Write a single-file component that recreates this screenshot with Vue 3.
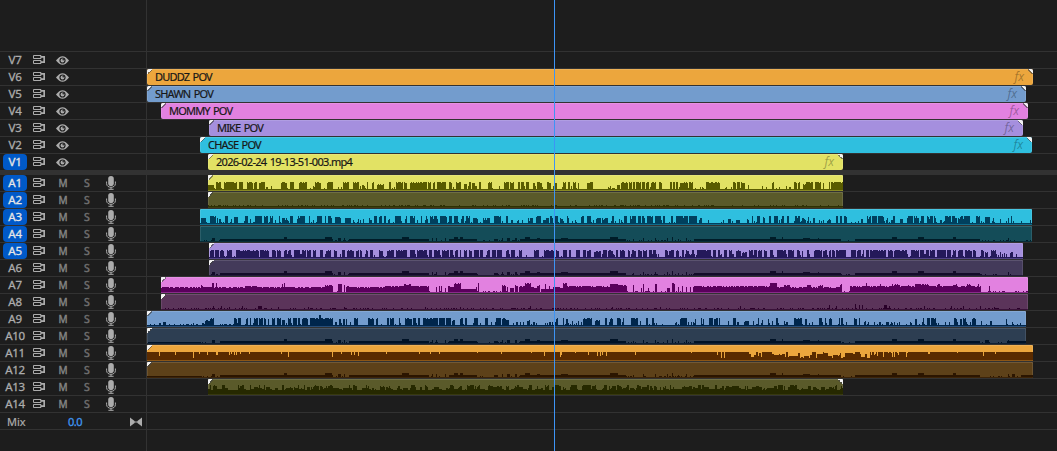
<!-- eslint-disable vue/multi-word-component-names -->
<!--
  Timeline panel: video tracks, audio tracks with waveforms, mix row and playhead
-->
<template>
  <div class="timeline">
    <div class="row ruler">
      <div class="head"></div>
    </div>

    <!-- video tracks -->
    <div v-for="track in videoTracks" :key="track.id" class="row" :class="{ last: track.id === 'V1' }">
      <div class="head">
        <span class="label" :class="{ active: track.id === 'V1' }">{{ track.id }}</span>
        <svg class="sync" viewBox="0 0 12 10">
          <path d="M.5.5h7.5v3H.5zM.5 5.5h7.5v3H.5z" />
          <path class="thick" d="M7.5 1.8h3.7v5.4H7.5" />
        </svg>
        <svg class="eye" viewBox="0 0 13 9">
          <path d="M0 4.5Q6.5-4 13 4.5Q6.5 13 0 4.5Z" fill="#acacac" />
          <circle cx="6.5" cy="4.5" r="3.1" fill="#1d1d1d" />
          <circle cx="6.5" cy="4.5" r="1.9" fill="#acacac" />
          <circle cx="7.2" cy="3.8" r=".8" fill="#1d1d1d" />
        </svg>
      </div>
      <div class="lane">
        <div v-if="track.name" class="clip video" :style="clipStyle(track)">
          <i class="corner"></i>
          <span class="name" :class="{ file: track.id === 'V1' }">{{ track.name }}</span>
          <span class="fx">fx</span>
          <i class="corner right"></i>
        </div>
      </div>
    </div>

    <div class="divider"></div>

    <!-- audio tracks -->
    <div v-for="track in audioTracks" :key="track.id" class="row">
      <div class="head">
        <span class="label" :class="{ active: track.on }">{{ track.id }}</span>
        <svg class="sync" viewBox="0 0 12 10">
          <path d="M.5.5h7.5v3H.5zM.5 5.5h7.5v3H.5z" />
          <path class="thick" d="M7.5 1.8h3.7v5.4H7.5" />
        </svg>
        <span class="mute">M</span>
        <span class="solo">S</span>
        <svg class="mic" viewBox="0 0 10 14">
          <rect x="2.2" y="0" width="5.6" height="10" rx="2.8" fill="#acacac" />
          <path d="M.6 5.5v2.2c0 4.8 8.8 4.8 8.8 0V5.5M5 11.3v2M2.4 13.3h5.2" fill="none" stroke="#acacac" />
        </svg>
      </div>
      <div class="lane">
        <div v-if="track.bg" class="clip audio" :style="clipStyle(track)">
          <svg class="wave" :width="track.end - track.start" height="16" shape-rendering="crispEdges">
            <path :d="wavePath(track)" :fill="track.wave" />
            <rect y="15" width="100%" height="1" :fill="track.bg" opacity=".35" />
          </svg>
          <i v-if="track.corner" class="corner"></i>
          <i v-if="track.id === 'A13'" class="corner right"></i>
        </div>
      </div>
    </div>

    <div class="row">
      <div class="head mix">
        <span class="mix-label">Mix</span>
        <span class="mix-value">0.0</span>
        <svg class="bowtie" viewBox="0 0 12 10">
          <path d="M0 .5L4.6 4V6L0 9.5ZM12 .5L7.4 4V6L12 9.5Z" fill="#acacac" />
          <path d="M4 5h4" stroke="#acacac" />
        </svg>
      </div>
    </div>
    <div class="rest">
      <div class="head"></div>
    </div>

    <div class="playhead"></div>
  </div>
</template>

<script setup>
// left edge of the lanes
const LANE = 147

const videoTracks = [
  { id: 'V7' },
  { id: 'V6', name: 'DUDDZ POV', start: 147, end: 1033, bg: '#eca63d' },
  { id: 'V5', name: 'SHAWN POV', start: 147, end: 1026, bg: '#739ccd' },
  { id: 'V4', name: 'MOMMY POV', start: 161, end: 1028, bg: '#e281e0' },
  { id: 'V3', name: 'MIKE POV', start: 209, end: 1023, bg: '#a58fde' },
  { id: 'V2', name: 'CHASE POV', start: 200, end: 1032, bg: '#2fbfdf' },
  { id: 'V1', name: '2026-02-24 19-13-51-003.mp4', start: 208, end: 843, bg: '#e2e264' }
]

// bursts: "from-to:height", height defaults to 8
const speechA1 = '208-213:5 216-220 224-229 230-233 234-236 239-242 247-252 254-256 259-262 263-264 281-284 285-286 290-293 299-306 315-320 327-332 343-348 353-358 362-364:5 367 372-373 377-383:6 389-390 396-402 404-406 410-426 428-430 433-434 437-439 440-445 449-451 456-458 459-460 464-466:6 469-470 472-474 479-480 488-491 504-508 510-513 518-519 521-523 526-528 533-534 537-541 547-550 555-556 563-565 568-569 573-575 578 587-592 617-619:5 621-627 629-631 633-634 636-638 639-640 642-644 646-648 651-655 659-661 670-671 673-674 676-677 680-687 689-692 706-707 708-719 733-735 737-739 741-744 748:6 772-773 794-796 798-799 803-805:6 806-812 815-820 823 829 831-842'
const speechA3 = '201-205:6 210-215 217 219-220:5 225-227 231:5 234-237:7 245-247 250 255-261 264-267 270-272 275:4 279 282-287:6 290-292 297-304 309 317-321 325 328-331 335-340:7 345-350:6 358:5 363:5 369:6 374-376 379-381 384-385 389:5 395-400 405-406 410-414 417:4 421 426-427 430-437 440-446 449-451 454-457 461-463 466-469 473-477:6 483-489:6 494-500 506-507 511:4 528-532:6 536-540 545-548:6 550-552 555-557 560-563:6 567-568 575:4 581-583 587-590 596-600:6 602-607:6 612-613 619:5 624-626 630-635 638-640 642-644 647-652 655-660 663-664 671-672 676-680 680-687 689-691 692-696 699-701:6 728-730:5 736-738:4 747:5 752 757-759 763-764:7 769-770 774-777 781-783 787-788 795-799 802-804:6 808 813-814:6 821:5 827-829:5 836-837 840-841 844-846 861-862:5 867-870 872-876 878-883 887:6 893-894 900-902:5 907-912 914-918 921-923 927-932 934-935 945-950 952-956 958-969 976-979 985-989:7 993:6 1000:5 1008 1011'
const speechA5 = '210-213 215-218 220-223 227-231 236-248 249-253 254-258 260-263 264-268 272-275 277-280 284-286 288-290 294-299 302-305 307-310 313-315 320-322 326-330 334-336 342-344 347-353 356-358 360-361 366-367 370-372 379-382 387-393 396-398 399-406 410-414 417-420 421-426 429-431 434-439 442-448 450-452 455-457 460 464-466 469-471 474-478 480-482 487-489 492-495 497-501 506-508 511-514 519-521 534-538 544-554 556-558 563-566 569-570 576-579 583-585 587-590 594-600:7 603-606 608-612 616-617 620-624 628-629 632-635 638-641 643-646 649-651 653-655 665-667 669-673 676-678 682-683 686-688 692-693 697-707 708-710 713-715 718-719 724-726 729-731 736-740 742-746:6 749-752 754-756 758-761 764-766 770-772 777-779 780-785 788-793 797-799 802 807-808 814-821 823-826 829-830 832-834 836-845 851-855 857-860 863 866-868 870-873 874-885 888-892 894-899 900-903 904-906 911-914 915-918 920-923 926-928 930-934 937-945 947-950 953-955 958-962 965-971 973-975 981-983 985-987:6 991-995 1000:6 1004:5 1010-1012:6'
const speechA9 = '159-160:3 163-165:4 186-188:2 193:3 202-203:3 205-209:6 210-213 234-236 238-240 246-247 250 254-257 259-262 264-265 268 272-274 277-280 282-284:6 288-290 293-296 298-299 302-307 310-313 314-318 319-320:11 321-332 339-340 343-344 346 354-357 368-373 376-377 387-388 390-393 399 405-408 409-411 413-415 418-419 423-430 431-437 439-444 446-450 452-454:6 460-462 465-466 474-477 485-487 496-500 502-505 506-508:6 527-529:6 534:5 545:3 550:4 556-557 563 566-567 572:6 578:5 583-591 595-599:6 605-606 610-612 617-620 623 631-637 640:5 646-647 652-653 680-686 695 701 703 709-712 714-717 719 728:5 733-735 737:5 744-748:5 753:5 758 762:6 768 772:5 776-777 784:5 794-801 805-806 812:5 819-821 825 829-831 839 841-842 854-856 859 865:5 868:4 886-888:4 899:4 915-916 923 927-929 931-935 945:5 949:5 954-956 960-961 963-965 972-975 981:5 990-991:5 1006 1012:4'
const roomA7 = '161-332:5 212-213:9 216:9 201-202:7 245-258:6 282:8 284:9 325-332:7 338-341:8 344 346-348:6 349-385:5 385-400:6 404-410:8 401-428:6 436:6 439:6 441:6 445:5 448-460:6 454-460:9 461-475:3 476:5 478:9 502-505:7 507:5 510-513:4 515-517:7 519-524:6 525-530:9 531-536:5 537-539:7 541-552:3 545 549:6 553-562:5 563-566:9 567-612:6 610-617:8 618-626:7 633:7 641:4 643 648:4 655-656 667-669:4 672-674:9 678:5 682:6 686:6 690:6 693-770:6 770-776:9 776-841:5 784-789:7 807-810:8 818-822:7 840-841:8 850-980:6 866:9 880 892:9 894-899:8 908 915-928:8 937-939:8 953-956:8 967-970:8 978:8 989:6'
const lowBed = '212-214:3 220-332:2 284-286:4 325-331:4 338-340:3 344:3 349-428:2 402-408:4 432:3 436:3 445:3 449-476:2 454-457:4 460-462:4 494-497:2 502:3 507-509:3 515-516:3 520-552:2 525-529:4 537-539:3 553-625:2 561-567:3 610-617:4 633:2 643:3 655:3 667:3 672:4 678:2 686:3 694-840:2 770-775:4 782:4 803-809:3 818:3 855-979:2 892-896:4 918-923:4 953-955:4 1008:3'

const audioTracks = [
  { id: 'A1', on: true, corner: true, start: 208, end: 843, bg: '#e2e264', wave: '#595b00', bursts: speechA1, floor: 1 },
  { id: 'A2', on: true, corner: true, start: 208, end: 843, bg: '#5a5a2a', wave: '#2f3004', bursts: '', floor: 1 },
  { id: 'A3', on: true, start: 200, end: 1032, bg: '#2fbfdf', wave: '#00405e', bursts: speechA3, floor: 1 },
  { id: 'A4', on: true, start: 200, end: 1032, bg: '#144c58', wave: '#001c28', bursts: lowBed, floor: 0 },
  { id: 'A5', on: true, corner: true, start: 209, end: 1023, bg: '#a58fde', wave: '#24195a', bursts: speechA5, floor: 1 },
  { id: 'A6', corner: true, start: 209, end: 1023, bg: '#433a5a', wave: '#130b29', bursts: lowBed, floor: 0 },
  { id: 'A7', corner: true, start: 161, end: 1028, bg: '#e281e0', wave: '#5a005c', bursts: roomA7, floor: 0 },
  { id: 'A8', corner: true, start: 161, end: 1028, bg: '#5b345a', wave: '#290029', bursts: '213:3 221:3 229:2 242:3 258-261:3 278:2 308:2 344:2 425:2 460:2 530:3 612:2 660:2 740:3 829:4 836:3 855:5 859:5 862:4 884-886:4 889:3 924:3 951:3 963:3 980:3 994:2', floor: 0 },
  { id: 'A9', corner: true, start: 147, end: 1026, bg: '#739ccd', wave: '#00264c', bursts: speechA9, floor: 1 },
  { id: 'A10', corner: true, start: 147, end: 1026, bg: '#2d3e52', wave: '#001226', bursts: '148-200:1 ' + lowBed + ' 985-988:3 1007-1026:2', floor: 0 },
  { id: 'A11', corner: true, start: 147, end: 1033, bg: '#eca63d', wave: '#5a2b00', bursts: '', floor: 9 },
  { id: 'A12', corner: true, start: 147, end: 1033, bg: '#5d4119', wave: '#2b1500', bursts: '148-200:1 ' + lowBed + ' 1012-1014:3 1021-1033:2', floor: 0 },
  { id: 'A13', corner: true, start: 208, end: 843, bg: '#5a5a2a', wave: '#262900', bursts: '', floor: 5 },
  { id: 'A14' }
]

// downward ticks cut in the A11 waveform: x, depth
const ticks = [
  [159, 4], [175, 3], [193, 6], [199, 2], [207, 3], [216, 3], [217, 3], [229, 3], [231, 2], [234, 3], [236, 3], [240, 2],
  [249, 2], [281, 2], [288, 5], [332, 5], [341, 2], [351, 3], [354, 3], [358, 4], [386, 2], [419, 2], [430, 2], [439, 2],
  [477, 1], [501, 2], [531, 1], [544, 4], [560, 5], [561, 3], [575, 1], [588, 3], [597, 4], [600, 4], [602, 3], [606, 4],
  [635, 3], [691, 1], [717, 3], [721, 6], [724, 6], [928, 2], [929, 2], [957, 1], [983, 4], [995, 2]
]

const clipStyle = (track) => ({
  marginLeft: track.start - LANE + 'px',
  width: track.end - track.start + 'px',
  backgroundColor: track.bg
})

/**
 * Small seeded generator, keeps the waveforms stable between renders
 */
const seeded = (seed) => () => {
  seed = (seed * 1103515245 + 12345) % 2147483648
  return seed / 2147483648
}

/**
 * Build the filled waveform, one column per pixel
 */
const wavePath = (track) => {
  const rand = seeded(Number(track.id.slice(1)) * 771 + 5)
  const width = track.end - track.start
  const cols = []
  const speech = ['A1', 'A3', 'A5', 'A9'].includes(track.id)
  let drift = 0
  for (let i = 0; i < width; i++) {
    const x = track.start + i
    let h = track.floor
    if (track.id === 'A13') {
      if (rand() > 0.4) drift = Math.floor(rand() * 6) - 1
      h += drift
    } else if (track.id === 'A11') {
      if (x > 748 && x < 870) {
        if (rand() > 0.5) drift = Math.floor(rand() * 7)
        h -= drift
      } else if (x >= 870 && x < 912 && rand() > 0.6) {
        h -= Math.floor(rand() * 6)
      }
    } else if (rand() > 0.75) {
      h += speech && x > 234 ? Math.floor(rand() * 4) : 1
    }
    cols.push(h)
  }
  for (const item of track.bursts.split(' ').filter(Boolean)) {
    const [range, height = '8'] = item.split(':')
    const [from, to = from] = range.split('-').map(Number)
    for (let x = from; x <= to; x++) {
      const i = x - track.start
      if (i < 0 || i >= width) continue
      let dip = 0
      if (Number(height) > 4 && rand() > 0.7) dip = track.id === 'A3' ? Math.floor(rand() * 4) : 1
      cols[i] = Math.max(cols[i], Number(height) - dip)
    }
  }
  if (track.id === 'A11') {
    for (const [x, depth] of ticks) cols[x - track.start] = 9 - depth
  } else {
    // the last row of the clip is the tinted edge, columns stand above it
    return cols.map((h, i) => `M${i} 16v${-h - 1}h1v${h + 1}z`).join('')
  }
  return cols.map((h, i) => `M${i} 16v${-h}h1v${h}z`).join('')
}
</script>

<style>
body {
  background: #1d1d1d;
}
</style>

<style scoped>
.timeline {
  position: relative;
  width: 1057px;
  height: 451px;
  overflow: hidden;
  background: #1d1d1d;
  color: #acacac;
  font-family: "Noto Sans", "Open Sans", sans-serif;
  font-size: 11px;
}

.row {
  display: flex;
  height: 16px;
  border-bottom: 1px solid #323232;
}

.row.ruler {
  height: 51px;
}

.row.last {
  border-bottom: 0;
}

.rest {
  display: flex;
  height: 21px;
}

.head {
  display: grid;
  grid-template-columns: 24px 12px 12px 13px 12px 12px 12px;
  align-items: center;
  box-sizing: border-box;
  width: 147px;
  flex: none;
  padding-left: 3px;
  border-right: 1px solid #323232;
  line-height: 16px;
}

.label {
  height: 16px;
  border-radius: 4px;
  text-align: center;
  font-size: 11.5px;
  letter-spacing: -0.3px;
  -webkit-text-stroke: 0.3px currentColor;
}

.label.active {
  background: #0059c8;
  color: #e6e6e6;
}

.sync {
  grid-column: 2;
  width: 12px;
  height: 10px;
  margin-left: 6px;
}

.sync path {
  fill: none;
  stroke: #acacac;
  stroke-width: 1;
}

.sync .thick {
  stroke-width: 1.7;
}

.eye {
  grid-column: 4;
  width: 13px;
  height: 9px;
  margin-left: 5px;
  margin-top: 1px;
}

.mute {
  grid-column: 4;
  margin-left: 7.5px;
  color: #858585;
  font-size: 10px;
  -webkit-text-stroke: 0.4px currentColor;
}

.solo {
  grid-column: 6;
  margin-left: 8px;
  color: #6e6e6e;
  font-size: 10.5px;
  -webkit-text-stroke: 0.5px currentColor;
}

.mic {
  grid-column: 7;
  width: 10px;
  height: 14px;
  margin-left: 17.5px;
}

.head.mix {
  display: flex;
  padding-left: 7px;
}

.mix-label {
  width: 61px;
  margin-top: 2px;
  -webkit-text-stroke: 0.2px currentColor;
}

.mix-value {
  width: 62px;
  margin-top: 2px;
  color: #3f96f0;
  letter-spacing: -0.5px;
  -webkit-text-stroke: 0.3px currentColor;
}

.bowtie {
  width: 12px;
  height: 10px;
  margin-top: 1px;
}

.divider {
  height: 5px;
  background: #323232;
}

.lane {
  flex: 1;
}

.clip {
  position: relative;
  display: flex;
  align-items: center;
  box-sizing: border-box;
  height: 16px;
  overflow: hidden;
  border-radius: 2px;
  box-shadow: inset 0 1px rgba(255, 255, 255, 0.13), inset 1px 0 rgba(255, 255, 255, 0.1), inset -1px 0 rgba(255, 255, 255, 0.1);
}

.clip.audio {
  border-radius: 1px;
}

.corner {
  position: absolute;
  top: 0;
  left: 0;
  width: 5px;
  height: 5px;
  background: linear-gradient(135deg, #f2f2f2 0 50%, #44444499 50% 66%, transparent 66%);
}

.corner.right {
  right: 0;
  left: auto;
  background: linear-gradient(225deg, #f2f2f2 0 50%, #44444499 50% 66%, transparent 66%);
}

.name {
  padding-left: 8px;
  color: #171717;
  line-height: 16px;
  letter-spacing: -0.8px;
  word-spacing: 1.2px;
  white-space: nowrap;
  -webkit-text-stroke: 0.2px currentColor;
}

.name.file {
  letter-spacing: -0.7px;
}

.fx {
  margin-left: auto;
  margin-right: 9px;
  color: rgba(0, 0, 0, 0.3);
  font-size: 12px;
  font-style: italic;
  line-height: 14px;
}

.wave {
  display: block;
}

.playhead {
  position: absolute;
  top: 0;
  left: 554px;
  width: 1px;
  height: 451px;
  background: #3d94f5;
}
</style>
